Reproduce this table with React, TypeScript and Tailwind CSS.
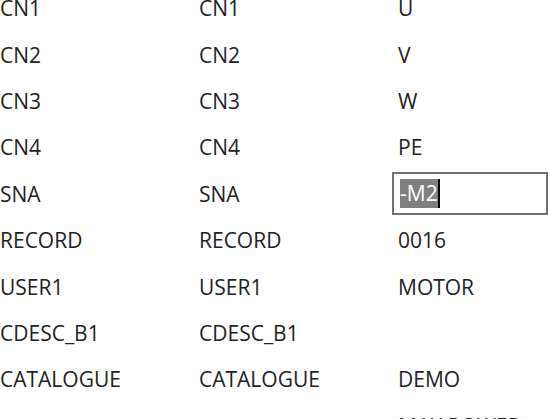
const rows: [string, string, string][] = [
  ["CN1", "CN1", "U"],
  ["CN2", "CN2", "V"],
  ["CN3", "CN3", "W"],
  ["CN4", "CN4", "PE"],
  ["SNA", "SNA", "-M2"],
  ["RECORD", "RECORD", "0016"],
  ["USER1", "USER1", "MOTOR"],
  ["CDESC_B1", "CDESC_B1", ""],
  ["CATALOGUE", "CATALOGUE", "DEMO"],
  ["", "", "MAX POWER"],
];

export default function App() {
  return (
    <div className="w-[548px] h-[419px] overflow-hidden bg-white">
      <div className="-mt-[15px] text-[#222] text-[21px] leading-[28px] font-['Open_Sans',sans-serif]">
        {rows.map(([a, b, c], i) => (
          <div key={i} className="flex h-[46.4px] items-center">
            <div className="w-[199px] shrink-0 whitespace-nowrap">{a}</div>
            <div className="w-[193px] shrink-0 whitespace-nowrap">{b}</div>
            {c === "-M2" ? (
              <div className="flex h-[43px] w-[156px] items-center border-2 border-[#707070] pl-[6px]">
                <span className="bg-[#808080] leading-[29px] text-white">-M2</span>
                <span className="h-[29px] w-[2px] bg-black" />
              </div>
            ) : (
              <div className="pl-[6px] whitespace-nowrap">{c}</div>
            )}
          </div>
        ))}
      </div>
    </div>
  );
}
